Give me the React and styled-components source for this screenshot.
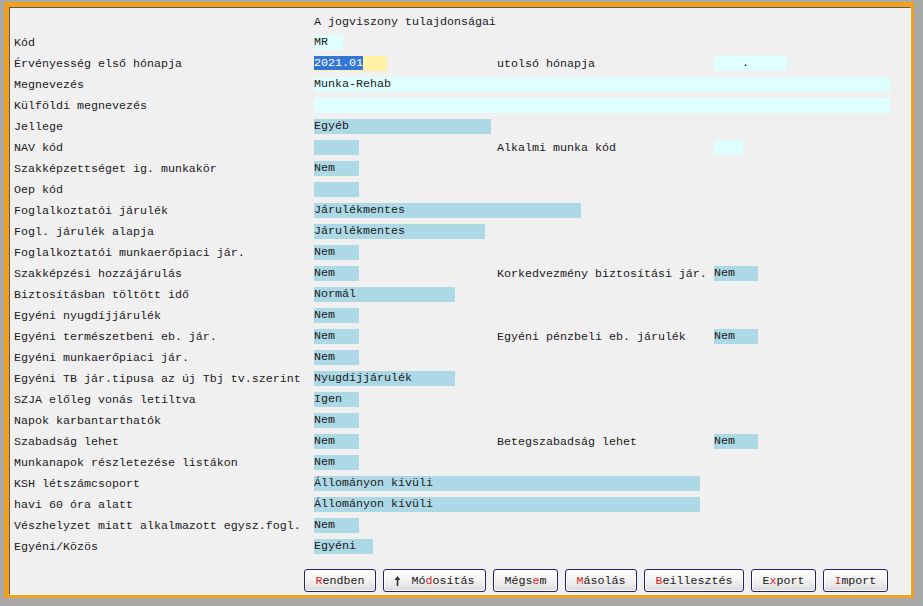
import React from "react";
import styled, { createGlobalStyle } from "styled-components";

const GlobalStyle = createGlobalStyle`
  html, body {
    margin: 0;
    padding: 0;
    background: #a9a9a9;
  }
  body {
    font-family: "Liberation Mono", "Courier New", monospace;
  }
`;

const Window = styled.div`
  box-sizing: border-box;
  width: 910px;
  height: 596px;
  margin: 2px 0 0 4px;
  border-style: solid;
  border-color: #f2a11f;
  border-width: 5px 3px 3px 5px;
`;

const Inner = styled.div`
  box-sizing: border-box;
  height: 100%;
  background: #f0f0f0;
  border-top: 1px solid #5a5a5a;
  border-left: 1px solid #5a5a5a;
  border-right: 1px solid #ffffff;
  border-bottom: 1px solid #ffffff;
  padding: 3px 0 0 4px;
  display: flex;
  flex-direction: column;
  font-size: 11.67px;
  color: #202020;
`;

const Row = styled.div`
  display: grid;
  grid-template-columns: 300px 183px 217px 1fr;
  height: 21px;
  align-items: center;
  white-space: pre;
`;

const Label = styled.span`
  grid-column: ${p => p.$col || 1};
`;

const ValueCell = styled.div`
  grid-column: ${p => (p.$wide ? "2 / -1" : "auto")};
  display: flex;
`;

const tones = {
  input: "#e0ffff",
  select: "#add8e6",
  edit: "#fff1a6"
};

const Field = styled.div`
  width: ${p => p.$w}px;
  height: 15px;
  line-height: 15px;
  background: ${p => tones[p.$tone]};
  overflow: hidden;
  white-space: pre;
`;

const Selected = styled.span`
  background: #3377d6;
  color: #ffffff;
`;

const Buttons = styled.div`
  display: flex;
  gap: 7px;
  margin-top: 12px;
  padding-left: 290px;
`;

const Button = styled.button`
  box-sizing: border-box;
  height: 23px;
  padding: 0 10.5px;
  display: flex;
  align-items: center;
  font-family: "Liberation Mono", "Courier New", monospace;
  font-size: 11.67px;
  color: #202020;
  border: 1px solid #23236b;
  border-radius: 3px;
  background: linear-gradient(#ffffff 0%, #f3f3f3 45%, #dcdcdc 100%);
  box-shadow: inset 0 0 0 1px #ffffff;
  white-space: pre;
`;

const Key = styled.span`
  color: #e01b1b;
`;

const ArrowIcon = styled.svg`
  width: 7px;
  height: 10px;
  margin-right: 10px;
`;

const rows = [
  { label: "Kód", field: { text: "MR", w: 29, tone: "input" } },
  {
    label: "Érvényesség első hónapja",
    field: { date: "2021.01", w: 73, tone: "edit" },
    right: "utolsó hónapja",
    rightField: { text: "    .", w: 73, tone: "input" }
  },
  { label: "Megnevezés", field: { text: "Munka-Rehab", w: 576, tone: "input" } },
  { label: "Külföldi megnevezés", field: { text: "", w: 576, tone: "input" } },
  { label: "Jellege", field: { text: "Egyéb", w: 177, tone: "select" } },
  {
    label: "NAV kód",
    field: { text: "", w: 45, tone: "select" },
    right: "Alkalmi munka kód",
    rightField: { text: "", w: 29, tone: "input" }
  },
  { label: "Szakképzettséget ig. munkakör", field: { text: "Nem", w: 45, tone: "select" } },
  { label: "Oep kód", field: { text: "", w: 45, tone: "select" } },
  { label: "Foglalkoztatói járulék", field: { text: "Járulékmentes", w: 267, tone: "select" } },
  { label: "Fogl. járulék alapja", field: { text: "Járulékmentes", w: 171, tone: "select" } },
  { label: "Foglalkoztatói munkaerőpiaci jár.", field: { text: "Nem", w: 45, tone: "select" } },
  {
    label: "Szakképzési hozzájárulás",
    field: { text: "Nem", w: 45, tone: "select" },
    right: "Korkedvezmény biztosítási jár.",
    rightField: { text: "Nem", w: 44, tone: "select" }
  },
  { label: "Biztosításban töltött idő", field: { text: "Normál", w: 141, tone: "select" } },
  { label: "Egyéni nyugdíjjárulék", field: { text: "Nem", w: 45, tone: "select" } },
  {
    label: "Egyéni természetbeni eb. jár.",
    field: { text: "Nem", w: 45, tone: "select" },
    right: "Egyéni pénzbeli eb. járulék",
    rightField: { text: "Nem", w: 44, tone: "select" }
  },
  { label: "Egyéni munkaerőpiaci jár.", field: { text: "Nem", w: 45, tone: "select" } },
  {
    label: "Egyéni TB jár.tipusa az új Tbj tv.szerint",
    field: { text: "Nyugdíjjárulék", w: 141, tone: "select" }
  },
  { label: "SZJA előleg vonás letiltva", field: { text: "Igen", w: 45, tone: "select" } },
  { label: "Napok karbantarthatók", field: { text: "Nem", w: 45, tone: "select" } },
  {
    label: "Szabadság lehet",
    field: { text: "Nem", w: 45, tone: "select" },
    right: "Betegszabadság lehet",
    rightField: { text: "Nem", w: 44, tone: "select" }
  },
  { label: "Munkanapok részletezése listákon", field: { text: "Nem", w: 45, tone: "select" } },
  { label: "KSH létszámcsoport", field: { text: "Állományon kívüli", w: 386, tone: "select" } },
  { label: "havi 60 óra alatt", field: { text: "Állományon kívüli", w: 386, tone: "select" } },
  {
    label: "Vészhelyzet miatt alkalmazott egysz.fogl.",
    field: { text: "Nem", w: 45, tone: "select" }
  },
  { label: "Egyéni/Közös", field: { text: "Egyéni", w: 59, tone: "select" } }
];

const buttons = [
  ["", "R", "endben"],
  ["Mó", "d", "osítás", true],
  ["Mégs", "e", "m"],
  ["", "M", "ásolás"],
  ["", "B", "eillesztés"],
  ["E", "x", "port"],
  ["", "I", "mport"]
];

const renderField = f => (
  <Field $w={f.w} $tone={f.tone}>
    {f.date ? <Selected>{f.date}</Selected> : f.text}
  </Field>
);

const App = () => (
  <>
    <GlobalStyle />
    <Window>
      <Inner>
        <Row>
          <Label />
          <ValueCell $wide>A jogviszony tulajdonságai</ValueCell>
        </Row>
        {rows.map(row => (
          <Row key={row.label}>
            <Label>{row.label}</Label>
            <ValueCell $wide={!row.right}>{renderField(row.field)}</ValueCell>
            {row.right && <Label $col={3}>{row.right}</Label>}
            {row.right && <ValueCell>{renderField(row.rightField)}</ValueCell>}
          </Row>
        ))}
        <Buttons>
          {buttons.map(([pre, key, post, arrow]) => (
            <Button key={pre + key + post}>
              {arrow && (
                <ArrowIcon viewBox="0 0 7 10">
                  <path d="M3.5 0 L6.5 4 L4.3 4 L4.3 10 L2.7 10 L2.7 4 L0.5 4 Z" fill="#333" />
                </ArrowIcon>
              )}
              {pre}
              <Key>{key}</Key>
              {post}
            </Button>
          ))}
        </Buttons>
      </Inner>
    </Window>
  </>
);

export default App;
